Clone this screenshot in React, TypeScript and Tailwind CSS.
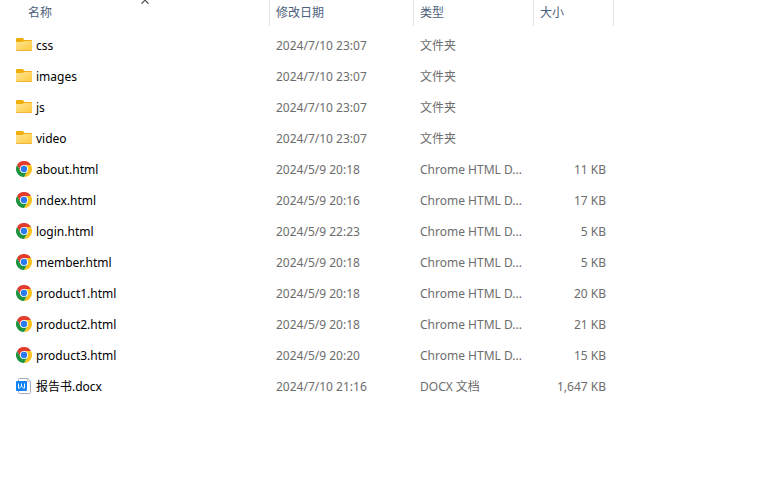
type Kind = 'folder' | 'chrome' | 'docx';

interface FileEntry {
  name: string;
  modified: string;
  type: string;
  size: string;
  kind: Kind;
}

const FILES: FileEntry[] = [
  { name: 'css', modified: '2024/7/10 23:07', type: '文件夹', size: '', kind: 'folder' },
  { name: 'images', modified: '2024/7/10 23:07', type: '文件夹', size: '', kind: 'folder' },
  { name: 'js', modified: '2024/7/10 23:07', type: '文件夹', size: '', kind: 'folder' },
  { name: 'video', modified: '2024/7/10 23:07', type: '文件夹', size: '', kind: 'folder' },
  { name: 'about.html', modified: '2024/5/9 20:18', type: 'Chrome HTML D...', size: '11 KB', kind: 'chrome' },
  { name: 'index.html', modified: '2024/5/9 20:16', type: 'Chrome HTML D...', size: '17 KB', kind: 'chrome' },
  { name: 'login.html', modified: '2024/5/9 22:23', type: 'Chrome HTML D...', size: '5 KB', kind: 'chrome' },
  { name: 'member.html', modified: '2024/5/9 20:18', type: 'Chrome HTML D...', size: '5 KB', kind: 'chrome' },
  { name: 'product1.html', modified: '2024/5/9 20:18', type: 'Chrome HTML D...', size: '20 KB', kind: 'chrome' },
  { name: 'product2.html', modified: '2024/5/9 20:18', type: 'Chrome HTML D...', size: '21 KB', kind: 'chrome' },
  { name: 'product3.html', modified: '2024/5/9 20:20', type: 'Chrome HTML D...', size: '15 KB', kind: 'chrome' },
  { name: '报告书.docx', modified: '2024/7/10 21:16', type: 'DOCX 文档', size: '1,647 KB', kind: 'docx' },
];

function FolderIcon() {
  return (
    <svg className="size-4 shrink-0" viewBox="0 0 16 16" aria-hidden="true">
      <defs>
        <linearGradient id="folder" x1="0" y1="0" x2="1" y2="1">
          <stop offset="0" stopColor="#ffe394" />
          <stop offset="1" stopColor="#ffcb3d" />
        </linearGradient>
      </defs>
      <path d="M0 2a1 1 0 0 1 1-1h5.2c.3 0 .6.1.8.3L8.6 3H15a1 1 0 0 1 1 1v4H0z" fill="#f0ae0e" />
      <path d="M0 5h6.2c.4 0 .7-.1 1-.4l.4-.3c.2-.2.5-.3.8-.3H15a1 1 0 0 1 1 1v8a1 1 0 0 1-1 1H1a1 1 0 0 1-1-1z" fill="url(#folder)" />
      <path d="M0 13a1 1 0 0 0 1 1h14a1 1 0 0 0 1-1z" fill="#efb338" />
    </svg>
  );
}

function ChromeIcon() {
  return (
    <svg className="size-4 shrink-0" viewBox="0 0 48 48" aria-hidden="true">
      <path d="M24 12h20.8A24 24 0 0 0 3.2 12l10.4 18z" fill="#e33b2e" />
      <path d="M34.4 30 24 48a24 24 0 0 0 20.8-36H24z" fill="#fcc31e" />
      <path d="M13.6 30 3.2 12A24 24 0 0 0 24 48l10.4-18z" fill="#1e9440" />
      <circle cx="24" cy="24" r="12" fill="#fff" />
      <circle cx="24" cy="24" r="9.5" fill="#2a7bf0" />
    </svg>
  );
}

function DocxIcon() {
  return (
    <svg className="size-4 shrink-0" viewBox="0 0 16 16" fill="none" aria-hidden="true">
      <path d="M3.5.5h8.2l2.8 2.8v11.2a1 1 0 0 1-1 1h-10a1 1 0 0 1-1-1v-13a1 1 0 0 1 1-1z" fill="#fff" stroke="#a3acbb" />
      <path d="M11.5.7v2.8h2.8" stroke="#c3cad5" />
      <rect y="3" width="11" height="10" rx="1" fill="#1284fa" />
      <path d="M2.5 5.5v4.6h.9l2.1-2 2.1 2h.9V5.5M5.5 5.5v2.8" stroke="#fff" />
    </svg>
  );
}

const ICONS = { folder: FolderIcon, chrome: ChromeIcon, docx: DocxIcon };

const HEADER = 'flex h-[26px] w-full items-center border-r border-[#e5e5e5] text-left';

export default function App() {
  return (
    <main className="min-h-screen bg-white font-['Noto_Sans','Noto_Sans_CJK_SC',sans-serif] text-[12px] leading-[18px] text-[#6d6d6d]">
      <table className="w-full table-fixed border-collapse whitespace-nowrap">
        <colgroup>
          <col className="w-[270px]" />
          <col className="w-36" />
          <col className="w-30" />
          <col className="w-20" />
          <col />
        </colgroup>
        <thead className="text-[#4c607a]">
          <tr>
            <th className="p-0 pb-1 font-normal" aria-sort="ascending">
              <button className={`${HEADER} relative pl-7`}>
                名称
                <svg className="absolute top-0 left-[141px] h-1 w-2" viewBox="0 0 8 4" fill="none" aria-hidden="true">
                  <path d="M.5 3.7 4 .2l3.5 3.5" stroke="#4a4a4a" strokeWidth="1.2" />
                </svg>
              </button>
            </th>
            <th className="p-0 pb-1 font-normal">
              <button className={`${HEADER} pl-1.5`}>修改日期</button>
            </th>
            <th className="p-0 pb-1 font-normal">
              <button className={`${HEADER} pl-1.5`}>类型</button>
            </th>
            <th className="p-0 pb-1 font-normal">
              <button className={`${HEADER} pl-1.5`}>大小</button>
            </th>
            <td />
          </tr>
        </thead>
        <tbody>
          {FILES.map((file) => {
            const Icon = ICONS[file.kind];
            return (
              <tr key={file.name} className="h-[31px]">
                <td className="p-0 pl-4 text-black">
                  <div className="flex items-start gap-1">
                    <Icon />
                    <span>{file.name}</span>
                  </div>
                </td>
                <td className="p-0 pl-1.5">{file.modified}</td>
                <td className="p-0 pl-1.5">{file.type}</td>
                <td className="p-0 pr-2 text-right">{file.size}</td>
                <td />
              </tr>
            );
          })}
        </tbody>
      </table>
    </main>
  );
}
